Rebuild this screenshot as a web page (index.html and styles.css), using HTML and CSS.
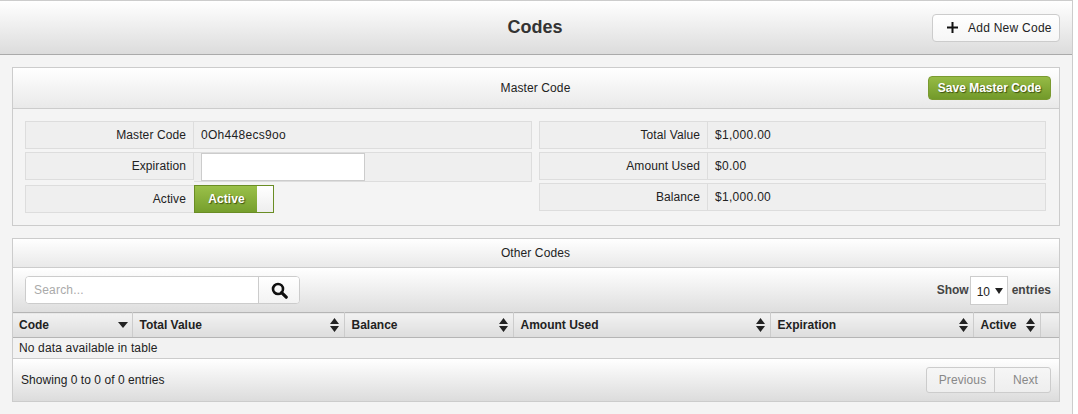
FILE: index.html
```html
<!DOCTYPE html>
<html lang="en">
<head>
<meta charset="utf-8">
<title>Codes</title>
<link rel="stylesheet" href="styles.css">
</head>
<body>
<div class="app">
  <header class="topbar">
    <div class="topbar-spacer"></div>
    <h1 class="title">Codes</h1>
    <div class="topbar-actions">
      <button class="btn-add" type="button">
        <svg class="plus" width="11" height="11" viewBox="0 0 11 11"><path d="M4.500 0h2v4.500H11v2H6.500V11h-2V6.500H0v-2h4.500z" fill="#111"/></svg>
        <span>Add New Code</span>
      </button>
    </div>
  </header>
  <main class="content">
    <section class="panel panel-master">
      <div class="panel-head head-master">
        <div class="head-side"></div>
        <h2 class="panel-title">Master Code</h2>
        <div class="head-side head-right"><button class="btn-save" type="button">Save Master Code</button></div>
      </div>
      <div class="master-body">
        <div class="col">
          <div class="row"><div class="label">Master Code</div><div class="value">0Oh448ecs9oo</div></div>
          <div class="row row-input"><div class="label">Expiration</div><div class="value value-input"><input class="date" type="text" aria-label="Expiration"></div></div>
          <div class="row row-toggle"><div class="label">Active</div>
            <div class="toggle"><span class="toggle-on">Active</span><span class="toggle-thumb"></span></div>
          </div>
        </div>
        <div class="col col-right">
          <div class="row"><div class="label">Total Value</div><div class="value">$1,000.00</div></div>
          <div class="row"><div class="label">Amount Used</div><div class="value">$0.00</div></div>
          <div class="row"><div class="label">Balance</div><div class="value">$1,000.00</div></div>
        </div>
      </div>
    </section>
    <section class="panel panel-other">
      <div class="panel-head head-other"><h2 class="panel-title">Other Codes</h2></div>
      <div class="toolbar">
        <div class="search">
          <input class="search-input" type="text" placeholder="Search...">
          <button class="search-btn" type="button" aria-label="Search">
            <svg width="17" height="17" viewBox="0 0 17 17"><circle cx="7" cy="7" r="5" fill="none" stroke="#111" stroke-width="2.6"/><path d="M10.6 10.6l4.6 4.6" stroke="#111" stroke-width="3.2" stroke-linecap="round"/></svg>
          </button>
        </div>
        <div class="length"><span>Show</span><span class="select">10<svg class="select-caret" width="8" height="6" viewBox="0 0 8 6"><path d="M0 0h8L4 6z" fill="#222"/></svg></span><span>entries</span></div>
      </div>
      <table class="grid">
        <colgroup>
          <col class="c1"><col class="c2"><col class="c3"><col class="c4"><col class="c5"><col class="c6"><col>
        </colgroup>
        <thead>
          <tr>
            <th><div class="th th-first"><span>Code</span><svg width="10" height="6" viewBox="0 0 10 6"><path d="M0 0h10L5 6z" fill="#222"/></svg></div></th>
            <th><div class="th"><span>Total Value</span><svg class="sort" width="9" height="14" viewBox="0 0 9 14"><path d="M4.500 0L9 6H0zM0 8h9l-4.500 6z" fill="#222"/></svg></div></th>
            <th><div class="th"><span>Balance</span><svg class="sort" width="9" height="14" viewBox="0 0 9 14"><path d="M4.500 0L9 6H0zM0 8h9l-4.500 6z" fill="#222"/></svg></div></th>
            <th><div class="th"><span>Amount Used</span><svg class="sort" width="9" height="14" viewBox="0 0 9 14"><path d="M4.500 0L9 6H0zM0 8h9l-4.500 6z" fill="#222"/></svg></div></th>
            <th><div class="th"><span>Expiration</span><svg class="sort" width="9" height="14" viewBox="0 0 9 14"><path d="M4.500 0L9 6H0zM0 8h9l-4.500 6z" fill="#222"/></svg></div></th>
            <th><div class="th"><span>Active</span><svg class="sort" width="9" height="14" viewBox="0 0 9 14"><path d="M4.500 0L9 6H0zM0 8h9l-4.500 6z" fill="#222"/></svg></div></th>
            <th></th>
          </tr>
        </thead>
        <tbody>
          <tr><td colspan="7">No data available in table</td></tr>
        </tbody>
      </table>
      <div class="foot">
        <div class="info">Showing 0 to 0 of 0 entries</div>
        <div class="pager"><span class="page page-prev">Previous</span><span class="page page-next">Next</span></div>
      </div>
    </section>
  </main>
</div>
</body>
</html>
```
FILE: styles.css
```css
* { box-sizing: border-box; }
html, body { margin: 0; padding: 0; background: #fff; }
body { font-family: "Liberation Sans", Arial, sans-serif; font-size: 12px; color: #222; width: 1078px; height: 414px; overflow: hidden; }
.app { width: 1073px; height: 414px; background: #f4f4f4; border-top: 1px solid #ccc; border-right: 1px solid #ccc; }
.topbar { height: 54px; display: flex; align-items: center; padding: 0 12px; background: linear-gradient(#fff, #dcdcdc); border-bottom: 1px solid #aaa; }
.topbar-spacer, .topbar-actions { flex: 1; display: flex; justify-content: flex-end; }
.title { margin: 0 2px 0 0; font-size: 18px; font-weight: bold; color: #333; }
.btn-add { width: 128px; height: 28px; display: flex; align-items: center; padding: 0 8px 0 14px; gap: 10px; white-space: nowrap; background: linear-gradient(#fff, #f6f6f6); border: 1px solid #ccc; border-radius: 4px; font: 12px "Liberation Sans", Arial, sans-serif; letter-spacing: .25px; color: #222; }
.plus { flex: none; }
.content { padding: 12px 12px 0; display: flex; flex-direction: column; gap: 12px; }
.panel { width: 1048px; border: 1px solid #ccc; background: #f4f4f4; }
.panel-master { height: 159px; }
.panel-head { background: linear-gradient(#fff, #e9e9e9); border-bottom: 1px solid #ccc; display: flex; align-items: center; }
.head-master { height: 41px; padding: 0 8px; }
.head-other { height: 29px; justify-content: center; }
.head-side { flex: 1; display: flex; }
.head-right { justify-content: flex-end; }
.panel-title { margin: 0; font-size: 12px; font-weight: normal; color: #222; letter-spacing: .1px; position: relative; left: -.5px; }
.btn-save { width: 123px; height: 24px; padding: 0; border: 1px solid #7a9a30; border-radius: 4px; background: linear-gradient(#96bb45, #729a2a); color: #fff; font: bold 12px "Liberation Sans", Arial, sans-serif; text-shadow: 1px 1px 1px #3c5210; }
.master-body { display: flex; gap: 7px; padding: 12px 13px 0 12px; }
.col { flex: 1; display: flex; flex-direction: column; gap: 3px; }
.row { display: flex; height: 28px; }
.label { width: 169px; height: 28px; flex: none; display: flex; align-items: center; justify-content: flex-end; padding-right: 7px; background: #efefef; border: 1px solid #ddd; letter-spacing: .1px; }
.value { flex: 1; display: flex; align-items: center; padding-left: 7px; background: #efefef; border: 1px solid #ddd; border-left: 0; letter-spacing: .3px; }
.row-input { height: 30px; }
.value-input { height: 30px; align-items: flex-start; }
.date { width: 164px; height: 28px; padding: 0; border: 1px solid #ccc; background: #fff; }
.row-toggle .label { border-right: 0; padding-right: 8px; }
.toggle { width: 80px; height: 28px; display: flex; border: 1px solid #6a8d24; }
.toggle-on { width: 62px; display: flex; align-items: center; justify-content: center; padding-left: 1px; background: linear-gradient(#9ac049, #769f2d); color: #fff; font-weight: bold; text-shadow: 1px 1px 1px #3c5210; letter-spacing: .1px; }
.toggle-thumb { flex: 1; background: linear-gradient(#fff, #eee); }
.toolbar { height: 44px; display: flex; align-items: flex-start; justify-content: space-between; padding: 8px 8px 0 12px; background: linear-gradient(#fff, #dedede); }
.search { display: flex; width: 275px; height: 28px; border: 1px solid #ccc; border-radius: 4px; background: #fff; overflow: hidden; }
.search-input { flex: 1; min-width: 0; border: 0; padding: 0 8px; font: 12px "Liberation Sans", Arial, sans-serif; letter-spacing: .2px; background: #fff; outline: 0; }
.search-input::placeholder { color: #aaa; opacity: 1; }
.search-btn { width: 41px; border: 0; border-left: 1px solid #ccc; padding: 0; display: flex; align-items: center; justify-content: center; background: linear-gradient(#fff, #f3f3f3); }
.length { display: flex; align-items: center; height: 28px; font-weight: bold; color: #444; }
.select { width: 38px; height: 29px; margin: 0 4px 0 1px; display: flex; align-items: center; padding: 3px 0 0 6px; background: #fff; border: 1px solid #ccc; font-weight: normal; color: #222; }
.select-caret { margin: -2px 0 0 5px; flex: none; }
.grid { width: 1046px; border-collapse: collapse; table-layout: fixed; }
.c1 { width: 119px; } .c2 { width: 212px; } .c3 { width: 169px; } .c4 { width: 257px; } .c5 { width: 203px; } .c6 { width: 67px; }
.grid th { height: 25px; padding: 0; font-weight: bold; text-align: left; background: linear-gradient(#f2f2f2, #dddddd); border-top: 1px solid #b5b5b5; border-bottom: 1px solid #b5b5b5; border-right: 1px solid #ccc; }
.grid th:last-child { border-right: 0; }
.th { display: flex; align-items: center; justify-content: space-between; padding: 0 5px 0 7px; color: #222; }
.th-first { padding: 0 4px 0 6px; }
.grid td { height: 21px; padding: 0 0 0 6px; background: #f2f2f2; border-bottom: 1px solid #ccc; letter-spacing: .15px; }
.foot { height: 42px; display: flex; align-items: center; justify-content: space-between; padding: 0 8px; background: linear-gradient(#fff, #dcdcdc); }
.info { letter-spacing: .05px; }
.pager { display: flex; width: 125px; height: 26px; border: 1px solid #ccc; border-radius: 3px; background: linear-gradient(#f6f6f6, #eee); color: #888; letter-spacing: .1px; }
.page { display: flex; align-items: center; justify-content: center; }
.page-prev { width: 68px; padding-left: 4px; border-right: 1px solid #ccc; }
.page-next { flex: 1; padding-left: 6px; }
```
